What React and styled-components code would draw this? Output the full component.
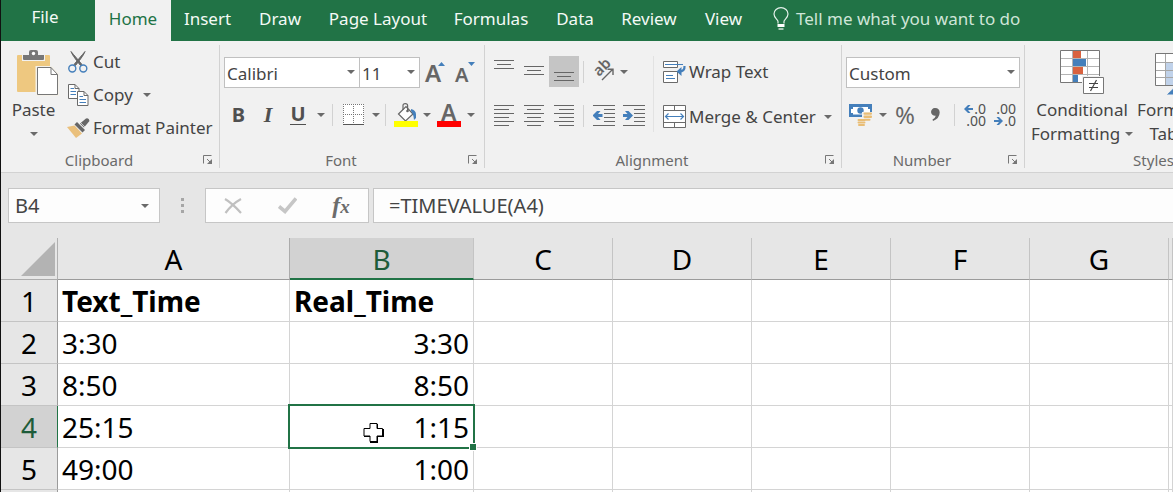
import React from 'react';
import styled, { createGlobalStyle, css } from 'styled-components';

const green = '#217346';
const ink = '#444444';
const line = '#6a6a6a';
const blue = '#447fbb';
const sans = "'Noto Sans', 'Open Sans', sans-serif";

const Global = createGlobalStyle`
  *, *::before, *::after { box-sizing: border-box; }
  html, body { margin: 0; height: 100%; }
  body { font-family: ${sans}; color: ${ink}; background: #e6e6e6; overflow: hidden; }
  button, input, select { font: inherit; color: inherit; margin: 0; }
  svg { display: block; flex: none; }
`;

const Window = styled.div`
  height: 100vh;
  border-left: 1px solid #111;
  overflow: hidden;
`;

/* ---------- ribbon tabs ---------- */
const TabBar = styled.nav`
  display: flex;
  height: 41px;
  background: ${green};
`;
const Tab = styled.button`
  flex: none;
  width: ${(p) => p.$w}px;
  border: 0;
  padding: ${(p) => (p.$file ? '0 6px 8px 0' : '0 0 4px')};
  background: ${(p) => (p.$active ? '#f1f1f1' : 'transparent')};
  color: ${(p) => (p.$active ? green : '#f4faf6')};
  font-size: 17px;
  white-space: nowrap;
`;
const TellMe = styled.button`
  display: flex;
  align-items: center;
  gap: 7px;
  border: 0;
  background: transparent;
  padding: 0 0 4px 16px;
  color: #cfe5d8;
  font-size: 17px;
  white-space: nowrap;
`;

/* ---------- ribbon ---------- */
const Ribbon = styled.div`
  display: flex;
  height: 132px;
  background: #f1f1f1;
  border-bottom: 1px solid #d2d2d2;
`;
const Group = styled.section`
  display: flex;
  flex-direction: column;
  flex: none;
  width: ${(p) => p.$w}px;
  margin: 4px 0;
  border-right: 1px solid #d2d2d2;
`;
const GroupBody = styled.div`
  display: flex;
  align-items: flex-start;
  height: 101px;
  padding: ${(p) => p.$pad || '0'};
`;
const GroupFooter = styled.footer`
  display: grid;
  grid-template-columns: 1fr 22px;
  grid-template-rows: 16px;
  align-items: center;
  height: 22px;
  padding-top: 6px;
  font-size: 15px;
  line-height: 20px;
  color: #6a6a6a;
  text-align: center;
`;
const Stack = styled.div`
  display: flex;
  flex-direction: column;
  gap: ${(p) => p.$gap || 0}px;
`;
const Row = styled.div`
  display: flex;
  align-items: center;
  height: ${(p) => p.$h || 33}px;
`;
const ToolButton = styled.button`
  display: flex;
  align-items: center;
  justify-content: center;
  gap: ${(p) => p.$gap || 0}px;
  flex: none;
  width: ${(p) => (p.$w ? p.$w + 'px' : 'auto')};
  height: ${(p) => p.$h || 31}px;
  border: 0;
  padding: 0;
  background: ${(p) => (p.$on ? '#c5c5c5' : 'transparent')};
  font-size: 17px;
  line-height: 24px;
  white-space: nowrap;
`;
const BigButton = styled.button`
  display: flex;
  flex-direction: column;
  align-items: center;
  flex: none;
  width: ${(p) => p.$w}px;
  border: 0;
  padding: 5px 0 0;
  background: transparent;
  font-size: 17px;
  line-height: 24px;
  white-space: nowrap;
`;
const BigLine = styled.span`
  display: flex;
  align-items: center;
  justify-content: center;
  gap: 5px;
  height: 24px;
`;
const IconSlot = styled.span`
  display: flex;
  justify-content: center;
  align-items: ${(p) => (p.$top ? 'flex-start' : 'center')};
  width: ${(p) => p.$w || 24}px;
  height: ${(p) => (p.$h ? p.$h + 'px' : 'auto')};
`;
const Divider = styled.span`
  flex: none;
  width: 1px;
  height: ${(p) => p.$h || 22}px;
  margin: ${(p) => p.$m || '0 5px 0 4px'};
  background: ${(p) => (p.$light ? '#e2e2e2' : '#d2d2d2')};
`;
const SelectWrap = styled.label`
  position: relative;
  flex: none;
  width: ${(p) => p.$w}px;
  height: 31px;
  & + & { margin-left: -1px; }
  svg { position: absolute; right: 5px; top: 13px; pointer-events: none; }
`;
const Select = styled.select`
  appearance: none;
  width: 100%;
  height: 100%;
  padding: 1px 0 0 2px;
  border: 1px solid #c0c0c0;
  border-radius: 0;
  background: #fff;
  font-size: 17px;
`;
const Letter = styled.span`
  font-size: 20px;
  line-height: 24px;
  font-weight: 700;
  color: #505050;
  ${(p) => p.$italic && css`font-family: 'Liberation Serif', serif; font-style: italic; font-size: 22px;`}
  ${(p) => p.$under && css`border-bottom: 1px solid #505050; line-height: 20px;`}
`;
const Percent = styled.span`
  font-size: 24px;
  color: #666;
`;

/* ---------- formula bar ---------- */
const FormulaBar = styled.div`
  display: flex;
  align-items: center;
  padding: 15px 0 15px 7px;
  margin-right: -1px;
  background: #e6e6e6;
`;
const Box = styled.div`
  display: flex;
  align-items: center;
  flex: ${(p) => (p.$w ? 'none' : '1')};
  width: ${(p) => (p.$w ? p.$w + 'px' : 'auto')};
  height: 35px;
  border: 1px solid #c6c6c6;
  background: #fdfdfd;
`;
const BarInput = styled.input`
  flex: 1;
  min-width: 0;
  border: 0;
  outline: 0;
  padding: 0 0 0 ${(p) => p.$pad}px;
  background: transparent;
  font-size: 20px;
`;

/* ---------- sheet ---------- */
const Sheet = styled.table`
  width: 100%;
  table-layout: fixed;
  border-collapse: separate;
  border-spacing: 0;
  background: #fff;
  color: #000;
  font-size: 28px;
  line-height: 36px;
`;
const Col = styled.col`
  width: ${(p) => (p.$w ? p.$w + 'px' : 'auto')};
`;
const Corner = styled.td`
  height: 42px;
  padding: 4px 3px 3px 20px;
  background: #e6e6e6;
  border-right: 1px solid #b0b0b0;
  border-bottom: 1px solid #ababab;
`;
const ColHead = styled.th`
  height: 42px;
  padding: ${(p) => (p.$on ? '1px 0 0' : '0')};
  font-weight: 400;
  background: ${(p) => (p.$on ? '#d2d2d2' : '#e6e6e6')};
  color: ${(p) => (p.$on ? '#1e5c3a' : '#000')};
  border-right: 1px solid ${(p) => (p.$dark ? '#ababab' : '#c4c4c4')};
  border-bottom: ${(p) => (p.$on ? `2px solid ${green}` : '1px solid #9b9b9b')};
`;
const RowHead = styled.th`
  height: 42px;
  padding: 0;
  font-weight: 400;
  background: ${(p) => (p.$on ? '#d2d2d2' : '#e6e6e6')};
  color: ${(p) => (p.$on ? '#1e5c3a' : '#000')};
  border-right: 1px solid ${(p) => (p.$on ? green : '#9b9b9b')};
  border-bottom: 1px solid #c4c4c4;
`;
const Cell = styled.td`
  position: relative;
  height: 42px;
  padding: 1px 4px 0;
  border-right: 1px solid #d4d4d4;
  border-bottom: 1px solid #d4d4d4;
  text-align: ${(p) => (p.$right ? 'right' : 'left')};
  font-weight: ${(p) => (p.$bold ? 700 : 400)};
  white-space: nowrap;
`;
const Selection = styled.span`
  position: absolute;
  z-index: 1;
  inset: -2px;
  border: 2px solid ${green};
  &::after {
    content: '';
    position: absolute;
    right: -4px;
    bottom: -4px;
    width: 8px;
    height: 8px;
    border: 1px solid #fff;
    background: ${green};
  }
`;
const Pointer = styled.span`
  position: absolute;
  z-index: 2;
  left: 73px;
  top: 16px;
`;

/* ---------- icons ---------- */
const GlyphText = styled.text`
  font-family: ${sans};
  font-weight: 600;
  font-size: ${(p) => p.$size}px;
  fill: #666;
`;
const Arrow = () => (
  <svg width="8" height="4" viewBox="0 0 8 4"><path d="M0 0H8L4 4Z" fill="#6a6a6a" /></svg>
);
const Launcher = () => (
  <svg width="10" height="10" viewBox="0 0 10 10" fill="none" stroke="#777">
    <path d="M.5 8.500V.5H8.500" /><path d="M4 4L8 8" /><path d="M9 4V9H4Z" fill="#777" stroke="none" />
  </svg>
);
const Bulb = () => (
  <svg width="16" height="23" viewBox="0 0 16 23" fill="none" stroke="#e4f1ea" strokeWidth="1.2">
    <path d="M5 16.500V14.500C5 12.500 1 11 1 7A7 6.400 0 0 1 15 7C15 11 11 12.500 11 14.500V16.500" />
    <path d="M4.500 17H11.500V20H4.500Z" fill="#fff" stroke="none" /><path d="M5.500 22H10.500" stroke="#fff" />
  </svg>
);
const PasteIcon = () => (
  <svg width="50" height="46" viewBox="-8 0 50 46">
    <rect x="0" y="5" width="33" height="37" rx="1" fill="#eec880" />
    <path d="M5 4.500H12V2Q12 0 14 0H19Q21 0 21 2V4.500H28V11H5Z" fill="#f1f1f1" />
    <path d="M6 5H12V2Q12 0 14 0H19Q21 0 21 2V5H27V9Q27 10 26 10H7Q6 10 6 9Z" fill="#777" />
    <circle cx="16.500" cy="3.500" r="1.700" fill="#fff" />
    <path d="M18.500 16H35L42 23V46H18.500Z" fill="#f4f1ea" />
    <path d="M20.500 17.500H34L40.500 24.500V44.500H20.500Z" fill="#fff" stroke="#777" />
    <path d="M34 17.500V24.500H40.500" fill="none" stroke="#777" />
  </svg>
);
const CutIcon = () => (
  <svg width="20" height="22" viewBox="0 0 20 22" fill="none">
    <path d="M3 0.500Q4 4 12.500 14.500L14 13.500L5.500 3.500Z" fill="#666" stroke="#666" />
    <path d="M17 0.500Q16 4 7.500 14.500L6 13.500L14.500 3.500Z" fill="#666" stroke="#666" />
    <circle cx="4.300" cy="17.500" r="3.500" stroke={blue} strokeWidth="1.400" />
    <circle cx="15.300" cy="17.500" r="3.500" stroke={blue} strokeWidth="1.400" />
  </svg>
);
const CopyIcon = () => (
  <svg width="21" height="22" viewBox="0 0 21 22">
    <path d="M.5 .5H7L11 4.500V14.500H.5Z" fill="#fff" stroke={line} /><path d="M7 .5V4.500H11" fill="none" stroke={line} />
    <path d="M2.500 4.500H6M2.500 7.500H8M2.500 10.500H8" stroke={blue} />
    <path d="M9.500 7.500H16L20 11.500V21.500H9.500Z" fill="#fff" stroke={line} /><path d="M16 7.500V11.500H20" fill="none" stroke={line} />
    <path d="M11.500 12.500H15M11.500 15.500H18M11.500 18.500H18" stroke={blue} />
  </svg>
);
const BrushIcon = () => (
  <svg width="23" height="20" viewBox="0 0 23 20">
    <path d="M0 9L7.500 7.500L15 15.500L9 20Z" fill="#eac07c" />
    <path d="M10 4L18 12L15.500 14.500L7.500 6.500Z" fill="#666" />
    <path d="M13 5.500L19 .5Q22 -.5 22.500 3L17 9.500Z" fill="#666" />
    <path d="M13 4L18 9" stroke="#f1f1f1" strokeWidth=".7" />
  </svg>
);
const GrowFont = ({ down }) => (
  <svg width="20" height="22" viewBox="0 0 20 22" overflow="visible">
    <GlyphText $size={down ? 20 : 24} x="0" y="20">A</GlyphText>
    <path d={down ? 'M13 0H20L16.500 4Z' : 'M13 4H20L16.500 0Z'} fill={blue} />
  </svg>
);
const BordersIcon = () => (
  <svg width="21" height="21" viewBox="0 0 21 21" stroke="#777">
    <rect width="21" height="21" fill="#fff" stroke="none" />
    <path d="M0 .5H21M.5 0V20M20.500 0V20M10.500 0V20M0 10.500H21" strokeDasharray="1 1" />
    <path d="M0 20.500H21" stroke="#555" />
  </svg>
);
const FillIcon = () => (
  <svg width="24" height="24" viewBox="0 0 24 24" fill="none">
    <path d="M4.500 11L12 3.500L19 11L11.500 18Z" fill="#fff" stroke="#666" strokeWidth="1.200" />
    <path d="M9 7V2.500Q9 .6 11.300 .6T13.600 2.500V8" stroke="#666" strokeWidth="1.200" />
    <circle cx="13.500" cy="8" r="1.300" fill="#666" />
    <path d="M17 6Q22 7 22 11.500V15L20 17Q19.500 11 17 8Z" fill={blue} />
    <rect y="18" width="24" height="6" fill="#ffff00" />
  </svg>
);
const FontColorIcon = () => (
  <svg width="24" height="24" viewBox="0 0 24 24" overflow="visible">
    <GlyphText $size={23} x="4" y="18">A</GlyphText>
    <rect y="18" width="24" height="6" fill="#ff0000" />
  </svg>
);
const Lines = ({ rows, h }) => (
  <svg width="20" height={h} viewBox={`0 0 20 ${h}`} stroke="#666">
    {rows.map(([y, a, b]) => <path key={y} d={`M${a} ${y + 0.5}H${b}`} />)}
  </svg>
);
const valign = (y) => [[y, 0, 20], [y + 4, 3, 17], [y + 8, 0, 20]];
const halign = (a, b) => [[0, 0, 20], [4, a, b], [8, 0, 20], [12, a, b], [16, 0, 20], [20, a, b]];

const OrientIcon = () => (
  <svg width="21" height="21" viewBox="0 0 21 21" fill="none" stroke="#666" strokeWidth="1.400" overflow="visible">
    <GlyphText $size={15} x="0" y="0" stroke="none" transform="translate(5 16) rotate(-45)">ab</GlyphText>
    <path d="M8 19L18.500 8.500M13.500 8.200H19V14" />
  </svg>
);
const IndentIcon = ({ right }) => (
  <svg width="22" height="22" viewBox="0 0 22 22">
    <path d="M0 .5H22M11 4.500H22M11 8.500H22M11 12.500H22M11 16.500H22M0 20.500H22" stroke="#666" />
    {right
      ? <path d="M0 9H4.500L2 6H5.500L10 10.500L5.500 15H2L4.500 12H0Z" fill={blue} />
      : <path d="M9.500 9H5L7.500 6H4L-.5 10.500L4 15H7.500L5 12H9.500Z" fill={blue} />}
  </svg>
);
const WrapIcon = () => (
  <svg width="23" height="22" viewBox="0 0 23 22" fill="none" stroke={line}>
    <path d="M.5 .5H14.500V6.500H.5ZM.5 10.500H14.500V21.500H.5Z" fill="#fff" />
    <path d="M2 3.500H20M3 14.500H10M3 17.500H12" stroke={blue} />
    <path d="M21.500 5Q22 10.500 16 10.500" stroke={blue} strokeWidth="2.200" />
    <path d="M18.500 6L13.500 10.500L18.500 15Z" fill={blue} stroke="none" />
  </svg>
);
const MergeIcon = () => (
  <svg width="23" height="23" viewBox="0 0 23 23" fill="none" stroke={line}>
    <path d="M.5 .5H22.500V22.500H.5ZM.5 5.500H22.500M.5 17.500H22.500M11.500 .5V5.500M11.500 17.500V22.500" fill="#fff" />
    <path d="M3 11.500H20M5.500 8.500L2.500 11.500L5.500 14.500M17.500 8.500L20.500 11.500L17.500 14.500" stroke={blue} strokeWidth="1.200" />
  </svg>
);
const MoneyIcon = () => (
  <svg width="23" height="22" viewBox="0 0 23 22">
    <path d="M0 0H23V13H0Z" fill={blue} /><path d="M4 3H19V5H21V9H19V10.500H4V9H2V5H4Z" fill="#fff" />
    <circle cx="11.500" cy="6.500" r="3.200" fill={blue} />
    <path d="M13 8H23V17H17V22H8V15H13Z" fill="#f1f1f1" />
    <g fill="#e9bd75">
      <rect x="14.500" y="8.500" width="8.500" height="2.300" rx="1" /><rect x="14.500" y="11.600" width="8.500" height="2.300" rx="1" />
      <rect x="14.500" y="14.700" width="7" height="2" rx="1" /><rect x="8.500" y="15" width="8" height="2" rx="1" />
      <rect x="8.500" y="17.600" width="8" height="2" rx="1" /><rect x="9" y="20" width="7" height="2" rx="1" />
    </g>
  </svg>
);
const CommaIcon = () => (
  <svg width="9" height="13" viewBox="0 0 9 13">
    <path d="M4.200 0A3.900 3.900 0 1 0 4.800 7.700Q4 10.500 1.500 11.500L2 13Q8.500 10.500 8.700 4.500Q8.500 0 4.200 0Z" fill="#666" />
  </svg>
);
const Decimals = styled.span`
  display: grid;
  grid-template-columns: 10px 12px;
  grid-template-rows: 12px 12px;
  align-items: center;
  justify-items: end;
  font-size: 14px;
  line-height: 12px;
  color: #505050;
  svg { justify-self: start; }
`;
const DecLong = styled.span`
  grid-column: 1 / 3;
`;
const SmallArrow = ({ right }) => (
  <svg width="9" height="8" viewBox="0 0 9 8">
    <path d={right ? 'M0 3H5L2.500 0H5L9 4L5 8H2.500L5 5H0Z' : 'M9 3H4L6.500 0H4L0 4L4 8H6.500L4 5H9Z'} fill={blue} />
  </svg>
);
const CondIcon = () => (
  <svg width="45" height="45" viewBox="0 0 45 45">
    <path d="M.5 .5H39.500V32.500H.5Z" fill="#fff" />
    <path d="M.5 8.500H39.500M.5 16.500H39.500M.5 24.500H39.500M12.500 0V33M27.500 0V33" stroke="#b4b4b4" fill="none" />
    <path d="M13 1H21V8H13ZM13 17H23V24H13Z" fill="#d9623f" />
    <path d="M13 9H26V16H13ZM13 25H18V32H13Z" fill={blue} />
    <path d="M.5 .5H39.500V32.500H.5Z" fill="none" stroke="#777" />
    <path d="M22 26H45V45H22Z" fill="#f1f1f1" />
    <path d="M23.500 27.500H43.500V43.500H23.500Z" fill="#fff" stroke="#777" />
    <path d="M29 33.500H38M29 37.500H38M36.500 30L30.500 41" stroke="#444" fill="none" strokeWidth="1.200" />
  </svg>
);
const TableIcon = () => (
  <svg width="44" height="45" viewBox="0 0 44 45">
    <path d="M.5 3.500H39.500V35.500H.5Z" fill="#fff" />
    <path d="M11 12H39V35H11Z" fill="#c0d2ea" />
    <path d="M.5 12.500H39.500M.5 20.500H39.500M.5 27.500H39.500M10.500 3V36M25.500 3V36" stroke="#a6a6a6" fill="none" />
    <path d="M.5 3.500H39.500V35.500H.5Z" fill="none" stroke="#777" />
    <path d="M11 45L30 27L35 32L20 45Z" fill={blue} stroke="#f1f1f1" />
  </svg>
);
const Grip = () => (
  <svg width="3" height="16" viewBox="0 0 3 16" fill="#a6a6a6"><path d="M0 0H3V3H0ZM0 6H3V9H0ZM0 12H3V15H0Z" /></svg>
);
const CancelIcon = () => (
  <svg width="18" height="16" viewBox="0 0 18 16" fill="none" stroke="#c0c0c0" strokeWidth="2.200"><path d="M1 1Q8 5 17 15M17 1Q8 6 1.500 15" /></svg>
);
const CheckIcon = () => (
  <svg width="19" height="17" viewBox="0 0 19 17" fill="none" stroke="#c6c6c6" strokeWidth="3.600"><path d="M1 9.500L7 14.500L18 1.500" /></svg>
);
const Fx = styled.span`
  font-family: 'Liberation Serif', serif;
  font-style: italic;
  font-weight: 700;
  font-size: 24px;
  line-height: 28px;
  color: #6c6c6c;
  small { font-size: 19px; }
`;
const CornerMark = () => (
  <svg width="34" height="34" viewBox="0 0 34 34"><path d="M34 0V34H0Z" fill="#b3b3b3" /></svg>
);
const CrossPointer = () => (
  <svg width="22" height="22" viewBox="0 0 22 22">
    <path d="M7 2H15V7H21V15H15V21H7V15H1V7H7Z" fill="#000" />
    <path d="M7 1.500H14V6.500H19.500V14H14V19.500H7V14H1V6.500H7Z" fill="#fff" stroke="#000" />
  </svg>
);

/* ---------- data ---------- */
const tabs = [
  ['Insert', 73], ['Draw', 72], ['Page Layout', 124], ['Formulas', 102], ['Data', 66], ['Review', 82], ['View', 67],
];
const columns = [['A', 232], ['B', 184], ['C', 139], ['D', 139], ['E', 139], ['F', 139], ['G', 139], ['', 0]];
const rows = [
  ['Text_Time', 'Real_Time'], ['3:30', '3:30'], ['8:50', '8:50'], ['25:15', '1:15'], ['49:00', '1:00'], ['', ''],
];

const Footer = ({ label, launch = true }) => (
  <GroupFooter>
    <span>{label}</span>
    {launch && <ToolButton $w={22} $h={16} aria-label={`${label} settings`}><Launcher /></ToolButton>}
  </GroupFooter>
);

const Drop = ({ w = 16, label }) => <ToolButton $w={w} aria-label={label}><Arrow /></ToolButton>;

function ClipboardGroup() {
  return (
    <Group $w={219}>
      <GroupBody>
        <BigButton $w={65}>
          <IconSlot $w={50} $h={48} $top><PasteIcon /></IconSlot>
          <BigLine>Paste</BigLine>
          <BigLine><Arrow /></BigLine>
        </BigButton>
        <Stack>
          <Row><ToolButton $gap={3}><IconSlot><CutIcon /></IconSlot>Cut</ToolButton></Row>
          <Row>
            <ToolButton $gap={3}><IconSlot><CopyIcon /></IconSlot>Copy</ToolButton>
            <Drop w={28} label="Copy options" />
          </Row>
          <Row><ToolButton $gap={3}><IconSlot><BrushIcon /></IconSlot>Format Painter</ToolButton></Row>
        </Stack>
      </GroupBody>
      <Footer label="Clipboard" />
    </Group>
  );
}

function FontGroup() {
  return (
    <Group $w={265}>
      <GroupBody $pad="12px 0 0 4px">
        <Stack $gap={11}>
          <Row $h={31}>
            <SelectWrap $w={136}>
              <Select aria-label="Font name"><option>Calibri</option></Select><Arrow />
            </SelectWrap>
            <SelectWrap $w={61}>
              <Select aria-label="Font size"><option>11</option></Select><Arrow />
            </SelectWrap>
            <ToolButton $w={30} aria-label="Increase font size"><GrowFont /></ToolButton>
            <ToolButton $w={30} aria-label="Decrease font size"><GrowFont down /></ToolButton>
          </Row>
          <Row $h={31}>
            <ToolButton $w={29} aria-label="Bold"><Letter>B</Letter></ToolButton>
            <ToolButton $w={30} aria-label="Italic"><Letter $italic>I</Letter></ToolButton>
            <ToolButton $w={30} aria-label="Underline"><Letter $under>U</Letter></ToolButton>
            <Drop label="Underline style" />
            <Divider $m="0 3px" />
            <ToolButton $w={35} aria-label="Borders"><BordersIcon /></ToolButton>
            <Drop w={10} label="Border style" />
            <Divider $m="0 4px" />
            <ToolButton $w={32} aria-label="Fill color"><FillIcon /></ToolButton>
            <Drop w={10} label="Fill colors" />
            <ToolButton $w={34} aria-label="Font color"><FontColorIcon /></ToolButton>
            <Drop w={10} label="Font colors" />
          </Row>
        </Stack>
      </GroupBody>
      <Footer label="Font" />
    </Group>
  );
}

function AlignmentGroup() {
  return (
    <Group $w={357}>
      <GroupBody $pad="11px 0 0 4px">
        <Stack $gap={13}>
          <Row $h={31}>
            <ToolButton $w={30} aria-label="Top align"><Lines h={31} rows={valign(4)} /></ToolButton>
            <ToolButton $w={30} aria-label="Middle align"><Lines h={31} rows={valign(10)} /></ToolButton>
            <ToolButton $w={30} $on aria-label="Bottom align"><Lines h={31} rows={valign(16)} /></ToolButton>
            <Divider />
            <ToolButton $w={30} aria-label="Orientation"><OrientIcon /></ToolButton>
            <Drop w={10} label="Orientation options" />
          </Row>
          <Row $h={31}>
            <ToolButton $w={30} aria-label="Align left"><Lines h={21} rows={halign(0, 15)} /></ToolButton>
            <ToolButton $w={30} aria-label="Center"><Lines h={21} rows={halign(3, 17)} /></ToolButton>
            <ToolButton $w={30} aria-label="Align right"><Lines h={21} rows={halign(5, 20)} /></ToolButton>
            <Divider />
            <ToolButton $w={30} aria-label="Decrease indent"><IndentIcon /></ToolButton>
            <ToolButton $w={30} aria-label="Increase indent"><IndentIcon right /></ToolButton>
          </Row>
        </Stack>
        <Divider $h={76} $light $m="0 9px 0 4px" />
        <Stack $gap={14}>
          <Row $h={31}><ToolButton $gap={3}><WrapIcon />Wrap Text</ToolButton></Row>
          <Row $h={31}>
            <ToolButton $gap={3}><MergeIcon />Merge &amp; Center</ToolButton>
            <Drop w={24} label="Merge options" />
          </Row>
        </Stack>
      </GroupBody>
      <Footer label="Alignment" />
    </Group>
  );
}

function NumberGroup() {
  return (
    <Group $w={183}>
      <GroupBody $pad="12px 0 0 4px">
        <Stack $gap={11}>
          <Row $h={31}>
            <SelectWrap $w={174}>
              <Select aria-label="Number format"><option>Custom</option></Select><Arrow />
            </SelectWrap>
          </Row>
          <Row $h={31}>
            <ToolButton $w={29} aria-label="Accounting format"><MoneyIcon /></ToolButton>
            <Drop label="Accounting formats" />
            <ToolButton $w={28} aria-label="Percent style"><Percent>%</Percent></ToolButton>
            <ToolButton $w={32} aria-label="Comma style"><CommaIcon /></ToolButton>
            <Divider $m="0 5px 0 3px" />
            <ToolButton $w={30} aria-label="Increase decimal">
              <Decimals><SmallArrow /><span>.0</span><DecLong>.00</DecLong></Decimals>
            </ToolButton>
            <ToolButton $w={30} aria-label="Decrease decimal">
              <Decimals><DecLong>.00</DecLong><SmallArrow right /><span>.0</span></Decimals>
            </ToolButton>
          </Row>
        </Stack>
      </GroupBody>
      <Footer label="Number" />
    </Group>
  );
}

function StylesGroup() {
  return (
    <Group $w={280}>
      <GroupBody $pad="0 0 0 6px">
        <BigButton $w={102}>
          <IconSlot $w={46} $h={48} $top><CondIcon /></IconSlot>
          <BigLine>Conditional</BigLine>
          <BigLine>Formatting <Arrow /></BigLine>
        </BigButton>
        <BigButton $w={88}>
          <IconSlot $w={46} $h={48} $top><TableIcon /></IconSlot>
          <BigLine>Format as</BigLine>
          <BigLine>Table <Arrow /></BigLine>
        </BigButton>
      </GroupBody>
      <Footer label="Styles" launch={false} />
    </Group>
  );
}

export default function App() {
  return (
    <Window>
      <Global />
      <TabBar>
        <Tab $w={94} $file>File</Tab>
        <Tab $w={76} $active>Home</Tab>
        {tabs.map(([name, w]) => <Tab key={name} $w={w}>{name}</Tab>)}
        <TellMe><Bulb />Tell me what you want to do</TellMe>
      </TabBar>
      <Ribbon>
        <ClipboardGroup />
        <FontGroup />
        <AlignmentGroup />
        <NumberGroup />
        <StylesGroup />
      </Ribbon>
      <FormulaBar>
        <Box $w={152}>
          <BarInput $pad={6} aria-label="Name box" defaultValue="B4" />
          <Drop w={28} label="Named ranges" />
        </Box>
        <IconSlot $w={45}><Grip /></IconSlot>
        <Box $w={164}>
          <ToolButton $w={54} aria-label="Cancel"><CancelIcon /></ToolButton>
          <ToolButton $w={54} aria-label="Enter"><CheckIcon /></ToolButton>
          <ToolButton $w={54} aria-label="Insert function"><Fx>f<small>x</small></Fx></ToolButton>
        </Box>
        <IconSlot $w={4} />
        <Box><BarInput $pad={15} aria-label="Formula" defaultValue="=TIMEVALUE(A4)" /></Box>
      </FormulaBar>
      <Sheet>
        <colgroup>
          <Col $w={57} />
          {columns.map(([name, w]) => <Col key={name} $w={w} />)}
        </colgroup>
        <thead>
          <tr>
            <Corner><CornerMark /></Corner>
            {columns.map(([name]) => (
              <ColHead key={name} scope="col" $on={name === 'B'} $dark={name === 'A'}>{name}</ColHead>
            ))}
          </tr>
        </thead>
        <tbody>
          {rows.map((cells, r) => (
            <tr key={r}>
              <RowHead scope="row" $on={r === 3}>{r + 1}</RowHead>
              {columns.map(([name], c) => (
                <Cell key={name} $bold={r === 0} $right={c === 1 && r > 0}>
                  {cells[c]}
                  {r === 3 && c === 1 && <><Selection /><Pointer><CrossPointer /></Pointer></>}
                </Cell>
              ))}
            </tr>
          ))}
        </tbody>
      </Sheet>
    </Window>
  );
}
